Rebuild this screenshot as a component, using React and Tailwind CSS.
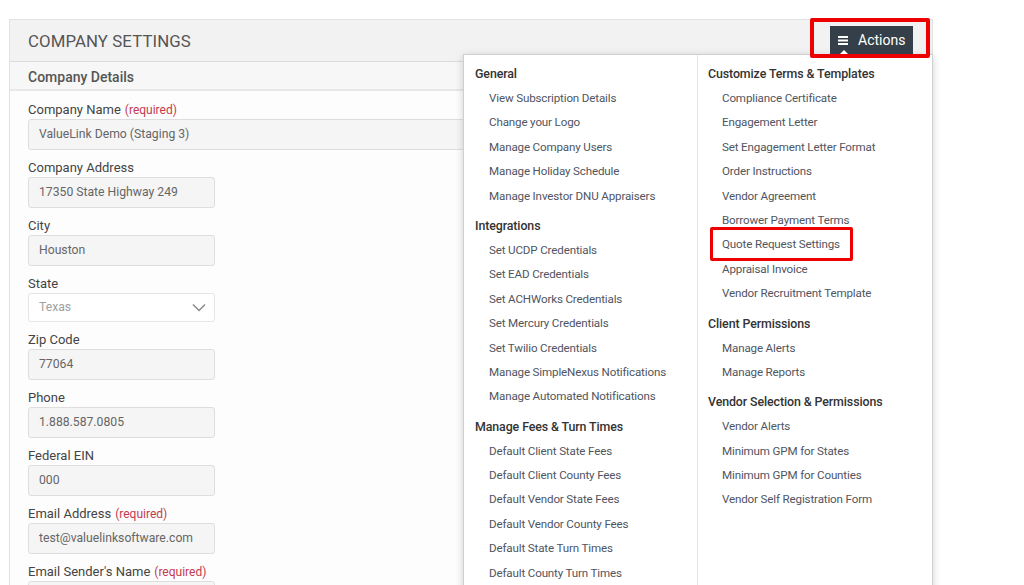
import React from 'react';

const FONT = { fontFamily: 'Roboto, "Liberation Sans", Arial, sans-serif' };

const fields = [
  { label: 'Company Name', required: true, value: 'ValueLink Demo (Staging 3)', wide: true },
  { label: 'Company Address', value: '17350 State Highway 249' },
  { label: 'City', value: 'Houston' },
  { label: 'State', value: 'Texas', select: true },
  { label: 'Zip Code', value: '77064' },
  { label: 'Phone', value: '1.888.587.0805' },
  { label: 'Federal EIN', value: '000' },
  { label: 'Email Address', required: true, value: 'test@valuelinksoftware.com' },
  { label: "Email Sender's Name", required: true, value: '' },
];

const leftMenu = [
  {
    title: 'General',
    items: [
      'View Subscription Details',
      'Change your Logo',
      'Manage Company Users',
      'Manage Holiday Schedule',
      'Manage Investor DNU Appraisers',
    ],
  },
  {
    title: 'Integrations',
    items: [
      'Set UCDP Credentials',
      'Set EAD Credentials',
      'Set ACHWorks Credentials',
      'Set Mercury Credentials',
      'Set Twilio Credentials',
      'Manage SimpleNexus Notifications',
      'Manage Automated Notifications',
    ],
  },
  {
    title: 'Manage Fees & Turn Times',
    items: [
      'Default Client State Fees',
      'Default Client County Fees',
      'Default Vendor State Fees',
      'Default Vendor County Fees',
      'Default State Turn Times',
      'Default County Turn Times',
    ],
  },
];

const rightMenu = [
  {
    title: 'Customize Terms & Templates',
    items: [
      'Compliance Certificate',
      'Engagement Letter',
      'Set Engagement Letter Format',
      'Order Instructions',
      'Vendor Agreement',
      'Borrower Payment Terms',
      'Quote Request Settings',
      'Appraisal Invoice',
      'Vendor Recruitment Template',
    ],
  },
  { title: 'Client Permissions', items: ['Manage Alerts', 'Manage Reports'] },
  {
    title: 'Vendor Selection & Permissions',
    items: ['Vendor Alerts', 'Minimum GPM for States', 'Minimum GPM for Counties', 'Vendor Self Registration Form'],
  },
];

function Field({ field }) {
  return (
    <div className="flex flex-col">
      <label className="h-[17px] mb-[1px] text-[13px] leading-[17px] text-[#444]">
        {field.label}
        {field.required && <span className="ml-1 text-[12px] text-[#c43a4f]">(required)</span>}
      </label>
      {field.select ? (
        <div className="w-[187px] h-[29px] flex items-center justify-between pl-[10px] pr-[8px] bg-white border border-[#e6e6e6] rounded-[3px]">
          <span className="text-[12.2px] text-[#a0a0a0]">{field.value}</span>
          <svg width="14" height="9" viewBox="0 0 14 9" fill="none" stroke="#8a8a8a" strokeWidth="1.5">
            <path d="M1 1.5 L7 7.5 L13 1.5" />
          </svg>
        </div>
      ) : (
        <div
          className={`${field.wide ? 'w-[640px]' : 'w-[187px]'} h-[31px] flex items-center pl-[10px] bg-[#f5f5f5] border border-[#dedede] rounded-[3px] text-[12.2px] text-[#666]`}
        >
          {field.value}
        </div>
      )}
    </div>
  );
}

function MenuColumn({ groups, left }) {
  return (
    <div className={left ? 'w-[234px] shrink-0 pt-[7px] pl-[11px] border-r border-[#e6e6e6]' : 'flex-1 pt-[7px] pl-[10px]'}>
      {groups.map((g, gi) => (
        <div key={g.title} className={gi > 0 ? 'mt-[6px]' : ''}>
          <div className="h-[24px] leading-[24px] text-[12.4px] tracking-[-0.1px] font-medium text-[#333]">{g.title}</div>
          {g.items.map((item) => (
            <div
              key={item}
              className="h-[24.4px] leading-[24.4px] pl-[14px] text-[11.6px] tracking-[-0.15px] text-[#50555f] whitespace-nowrap"
            >
              {item === 'Quote Request Settings' ? (
                <span className="relative inline-block">
                  {item}
                  <span className="absolute -left-[12px] -right-[13px] -top-[5px] -bottom-[4px] border-[3px] border-[#ee0000] rounded-[2px]" />
                </span>
              ) : (
                item
              )}
            </div>
          ))}
        </div>
      ))}
    </div>
  );
}

export default function App() {
  return (
    <div className="w-full h-screen overflow-hidden bg-white" style={FONT}>
      <div className="ml-[9px] mt-[19px] w-[924px] h-[600px] relative border border-[#e2e2e2] bg-[#fdfdfd]">
        <div className="h-[42px] flex items-center pt-[2px] pl-[18px] bg-[#f2f2f2] border-b border-[#dcdcdc]">
          <h1 className="text-[16.8px] text-[#555] tracking-[0.1px]">COMPANY SETTINGS</h1>
        </div>
        <div className="h-[29px] flex items-center pt-[3px] pl-[18px] bg-[#f7f7f7] border-b-2 border-[#e8e8e8]">
          <h2 className="text-[14px] font-medium text-[#555]">Company Details</h2>
        </div>
        <div className="pl-[18px] pt-[10px] flex flex-col gap-[9px]">
          {fields.map((f) => (
            <Field key={f.label} field={f} />
          ))}
        </div>

        {/* Actions dropdown */}
        <div className="absolute left-[453px] top-[34px] w-[470px] h-[560px] flex bg-white border border-[#cfcfcf] shadow-[0_2px_8px_rgba(0,0,0,0.18)] z-10">
          <MenuColumn groups={leftMenu} left />
          <MenuColumn groups={rightMenu} />
        </div>

        <div className="absolute left-[820px] top-[6px] z-20">
          <button className="relative w-[83px] h-[29px] flex items-center pl-[8px] gap-[10px] bg-[#343f4a] text-white text-[14px]">
            <svg width="10" height="9" viewBox="0 0 10 9" fill="#fff">
              <rect x="0" y="0" width="10" height="2" />
              <rect x="0" y="3.5" width="10" height="2" />
              <rect x="0" y="7" width="10" height="2" />
            </svg>
            <span>Actions</span>
            <span className="absolute left-[9px] bottom-0 w-0 h-0 border-l-[5px] border-r-[5px] border-b-[5px] border-l-transparent border-r-transparent border-b-white" />
          </button>
          <span className="absolute -left-[20px] -right-[17px] -top-[8px] -bottom-[3px] border-[4px] border-[#ee0000] rounded-[2px]" />
        </div>
      </div>
    </div>
  );
}
